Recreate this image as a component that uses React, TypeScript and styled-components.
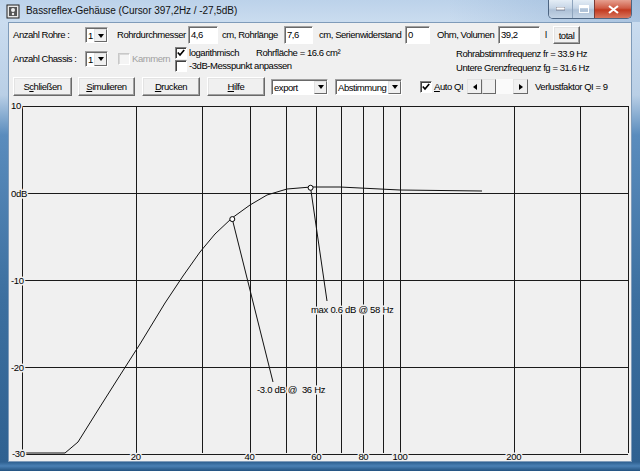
import styled, { createGlobalStyle } from "styled-components";

const UI_FONT = `"Liberation Sans", Arial, sans-serif`;

const GlobalStyle = createGlobalStyle`
  html, body { margin: 0; padding: 0; overflow: hidden; }
  body { font-family: ${UI_FONT}; font-size: 9.5px; letter-spacing: -0.45px; color: #000; }
  * { box-sizing: border-box; }
`;

const Window = styled.div`
  width: 640px;
  height: 471px;
  display: flex;
  flex-direction: column;
  padding: 0 8px 9px 8px;
  background: linear-gradient(
    180deg,
    #bcd2ea 0px,
    #cadcef 22px,
    #b9cfe6 95px,
    #5a8cbd 135px,
    #3c6f9f 300px,
    #2f6191 462px,
    #4a80b4 466px,
    #23527f 471px
  );
`;

const TitleBar = styled.div`
  height: 22px;
  margin: 0 -8px;
  padding: 0 8px 0 6px;
  display: flex;
  align-items: flex-start;
  background: linear-gradient(90deg, transparent 0%, transparent 70%, rgba(110, 150, 195, 0.35) 100%);
`;

const TitleText = styled.span`
  margin: 3px 0 0 6px;
  font-size: 10px;
  letter-spacing: -0.05px;
  line-height: 16px;
  color: #111;
`;

const CaptionGroup = styled.div`
  margin-left: auto;
  display: flex;
  height: 19px;
  border: 1px solid #4d6582;
  border-top: none;
  border-radius: 0 0 5px 5px;
  overflow: hidden;
`;

const CaptionBtn = styled.div<{ $w: number; $close?: boolean }>`
  width: ${(p) => p.$w}px;
  display: flex;
  align-items: center;
  justify-content: center;
  border-left: ${(p) => (p.$close ? "1px solid #7a3b35" : "1px solid #8ea4bd")};
  background: ${(p) =>
    p.$close
      ? "linear-gradient(180deg, #e6a090 0%, #cf5c46 45%, #c2391f 55%, #d8775f 100%)"
      : "linear-gradient(180deg, #e4edf6 0%, #c6d5e6 45%, #adc0d6 55%, #c4d4e6 100%)"};
  &:first-child { border-left: none; }
`;

const Client = styled.div`
  flex: 1;
  display: flex;
  flex-direction: column;
  background: #f0f0f0;
  border: 1px solid #7f9bb9;
`;

const Row = styled.div<{ $h: number; $mt?: number }>`
  height: ${(p) => p.$h}px;
  margin-top: ${(p) => p.$mt ?? 0}px;
  padding-left: 4px;
  display: flex;
  align-items: center;
  white-space: nowrap;
`;

const Label = styled.span<{ $w?: number; $ml?: number; $dim?: boolean }>`
  ${(p) => (p.$w ? `width: ${p.$w}px; flex: none;` : "")}
  margin-left: ${(p) => p.$ml ?? 0}px;
  color: ${(p) => (p.$dim ? "#a0a0a0" : "#000")};
  line-height: 12px;
`;

const TextBox = styled.div<{ $w: number }>`
  width: ${(p) => p.$w}px;
  height: 18px;
  flex: none;
  padding: 1px 2px;
  line-height: 13px;
  background: #fff;
  border: 1px solid;
  border-color: #a0a0a0 #fff #fff #a0a0a0;
  box-shadow: inset 1px 1px #696969;
`;

const Combo = styled.div<{ $w: number; $ml?: number }>`
  width: ${(p) => p.$w}px;
  height: 16px;
  flex: none;
  margin-left: ${(p) => p.$ml ?? 0}px;
  display: flex;
  background: #fff;
  border: 1px solid;
  border-color: #a0a0a0 #fff #fff #a0a0a0;
  box-shadow: inset 1px 1px #696969;
  padding: 1px 0 0 1px;
`;

const ComboText = styled.span`
  flex: 1;
  padding-left: 1px;
  line-height: 13px;
`;

const ComboArrow = styled.span`
  width: 13px;
  flex: none;
  display: flex;
  align-items: center;
  justify-content: center;
  background: #f0f0f0;
  border: 1px solid;
  border-color: #e3e3e3 #696969 #696969 #e3e3e3;
  &::after {
    content: "";
    border-left: 3.5px solid transparent;
    border-right: 3.5px solid transparent;
    border-top: 4px solid #000;
  }
`;

const Button = styled.div<{ $w: number; $ml?: number; $h?: number }>`
  width: ${(p) => p.$w}px;
  height: ${(p) => p.$h ?? 19}px;
  flex: none;
  margin-left: ${(p) => p.$ml ?? 0}px;
  display: flex;
  align-items: center;
  justify-content: center;
  background: #f0f0f0;
  border: 1px solid;
  border-color: #fff #696969 #696969 #fff;
  box-shadow: inset -1px -1px #a0a0a0, inset 1px 1px #e3e3e3;
`;

const CheckBox = styled.span<{ $ml?: number; $disabled?: boolean }>`
  width: 12px;
  height: 12px;
  flex: none;
  margin-left: ${(p) => p.$ml ?? 0}px;
  display: inline-flex;
  align-items: center;
  justify-content: center;
  background: ${(p) => (p.$disabled ? "#f4f4f4" : "#fff")};
  border: 1px solid;
  border-color: ${(p) =>
    p.$disabled ? "#c8c8c8 #fff #fff #c8c8c8" : "#808080 #fff #fff #808080"};
  box-shadow: inset 1px 1px ${(p) => (p.$disabled ? "#d8d8d8" : "#404040")};
`;

const CheckGroup = styled.div`
  width: 281px;
  flex: none;
  align-self: flex-start;
  padding-top: 1px;
  display: flex;
  flex-direction: column;
`;

const CheckLine = styled.div`
  height: 13px;
  display: flex;
  align-items: center;
`;

const InfoLines = styled.div`
  align-self: flex-start;
  padding-top: 2px;
  display: flex;
  flex-direction: column;
  line-height: 14px;
`;

const ScrollBar = styled.div<{ $ml?: number }>`
  width: 61px;
  height: 15px;
  flex: none;
  margin-left: ${(p) => p.$ml ?? 0}px;
  display: flex;
  background: #fafafa;
`;

const ScrollPart = styled.span<{ $w: number; $dir?: "left" | "right" }>`
  width: ${(p) => p.$w}px;
  flex: none;
  display: flex;
  align-items: center;
  justify-content: center;
  background: #f0f0f0;
  border: 1px solid;
  border-color: #e3e3e3 #696969 #696969 #e3e3e3;
  ${(p) =>
    p.$dir
      ? `&::after {
    content: "";
    border-top: 3.5px solid transparent;
    border-bottom: 3.5px solid transparent;
    ${p.$dir === "left" ? "border-right" : "border-left"}: 4px solid #000;
  }`
      : ""}
`;

const ScrollTrack = styled.span`
  flex: 1;
`;

const Chart = styled.svg`
  display: block;
  flex: none;
  letter-spacing: normal;
`;

// chart scale: 10 Hz .. 400 Hz log, +10 .. -30 dB
const X0 = 22;
const X1 = 628;
const Y_TOP = 106;
const Y_BOT = 453;
const xOf = (hz: number) => X0 + 378 * Math.log10(hz / 10);
const yOf = (db: number) => 193 - db * 8.7;

const gridHz = [20, 30, 40, 50, 60, 70, 80, 90, 100, 200, 300];
const gridDb = [10, 0, -10, -20, -30];
const xLabels = [20, 40, 60, 80, 100, 200];

// simulated response, traced in plot pixels
const curve: [number, number][] = [
  [22, 453], [65, 453], [78, 442], [98, 410], [117, 380], [140, 344],
  [165, 303], [183, 276], [200, 252], [215, 234], [232, 218], [250, 205],
  [267, 195], [287, 189], [311, 187], [340, 187], [400, 190], [482, 191],
];

const halo = {
  paintOrder: "stroke" as const,
  stroke: "#f0f0f0",
  strokeWidth: 3,
  whiteSpace: "pre" as const,
};

function ResponseChart() {
  const m1 = { x: xOf(36), y: yOf(-3) };
  const m2 = { x: xOf(58), y: yOf(0.6) };
  return (
    <Chart width={622} height={365} viewBox="9 96 622 365">
      <g stroke="#1a1a1a" strokeWidth={1} shapeRendering="crispEdges">
        {gridDb.map((db) => (
          <line key={db} x1={X0} x2={X1} y1={Math.round(yOf(db)) + 0.5} y2={Math.round(yOf(db)) + 0.5} />
        ))}
        <line x1={X0 + 0.5} x2={X0 + 0.5} y1={Y_TOP} y2={Y_BOT} />
        <line x1={X1 + 0.5} x2={X1 + 0.5} y1={Y_TOP} y2={Y_BOT} />
        {gridHz.map((hz) => (
          <line key={hz} x1={Math.round(xOf(hz)) + 0.5} x2={Math.round(xOf(hz)) + 0.5} y1={Y_TOP} y2={Y_BOT} />
        ))}
      </g>
      <polyline
        points={curve.map((p) => p.join(",")).join(" ")}
        fill="none"
        stroke="#111"
        strokeWidth={1}
      />
      <line x1={m1.x} y1={m1.y} x2={273} y2={382} stroke="#111" />
      <line x1={m2.x} y1={m2.y} x2={327} y2={301} stroke="#111" />
      <circle cx={m1.x} cy={m1.y} r={2.5} fill="#fff" stroke="#000" />
      <circle cx={m2.x} cy={m2.y} r={2.5} fill="#fff" stroke="#000" />
      <g fontFamily={UI_FONT} fontSize={9.5} letterSpacing={-0.3} fill="#000">
        <text x={11} y={109} style={halo}>10</text>
        <text x={11} y={196.5} style={halo}>0dB</text>
        <text x={11} y={283.5} style={halo}>-10</text>
        <text x={11} y={370.5} style={halo}>-20</text>
        <text x={12} y={457} style={halo}>-30</text>
        {xLabels.map((hz) => (
          <text key={hz} x={xOf(hz)} y={459.5} textAnchor="middle" style={halo}>
            {hz}
          </text>
        ))}
        <text x={311} y={313} style={halo}>max 0.6 dB @ 58 Hz</text>
        <text x={257} y={392.5} style={halo}>{"-3.0 dB @  36 Hz"}</text>
      </g>
    </Chart>
  );
}

function AppIcon() {
  return (
    <svg width="14" height="15" viewBox="0 0 14 15" style={{ marginTop: 4 }}>
      <rect x="1" y="1" width="12" height="13" fill="#e8e8e8" stroke="#222" />
      <rect x="3" y="3" width="8" height="9" fill="#555" />
      <circle cx="7" cy="6" r="2" fill="#eee" />
      <circle cx="7" cy="10" r="1.2" fill="#eee" />
    </svg>
  );
}

function Check() {
  return (
    <svg width="8" height="8" viewBox="0 0 8 8">
      <polyline points="0.8,3.5 3,6 7.2,1" fill="none" stroke="#000" strokeWidth={1.7} />
    </svg>
  );
}

export default function App() {
  return (
    <>
      <GlobalStyle />
      <Window>
        <TitleBar>
          <AppIcon />
          <TitleText>Bassreflex-Gehäuse (Cursor 397,2Hz / -27,5dB)</TitleText>
          <CaptionGroup>
            <CaptionBtn $w={23}>
              <svg width="9" height="4"><rect width="9" height="3" fill="#fff" stroke="#334" strokeWidth="0.5" /></svg>
            </CaptionBtn>
            <CaptionBtn $w={22}>
              <svg width="10" height="8"><rect x="0.5" y="0.5" width="9" height="7" fill="none" stroke="#fff" strokeWidth="1" /><rect x="1" y="1" width="8" height="2" fill="#fff" /></svg>
            </CaptionBtn>
            <CaptionBtn $w={37} $close>
              <svg width="11" height="9"><path d="M1 1 L10 8 M10 1 L1 8" stroke="#fff" strokeWidth="2.2" /></svg>
            </CaptionBtn>
          </CaptionGroup>
        </TitleBar>
        <Client>
          <Row $h={18} $mt={3}>
            <Label $w={72}>Anzahl Rohre :</Label>
            <Combo $w={23}><ComboText>1</ComboText><ComboArrow /></Combo>
            <Label $w={71} $ml={9}>Rohrdurchmesser</Label>
            <TextBox $w={30}>4,6</TextBox>
            <Label $w={62} $ml={4}>cm, Rohrlänge</Label>
            <TextBox $w={29}>7,6</TextBox>
            <Label $w={86} $ml={6}>cm, Serienwiderstand</Label>
            <TextBox $w={25}>0</TextBox>
            <Label $w={61} $ml={7}>Ohm, Volumen</Label>
            <TextBox $w={42}>39,2</TextBox>
            <Label $w={8} $ml={5}>l</Label>
            <Button $w={27} $h={18}>total</Button>
          </Row>
          <Row $h={27} $mt={1}>
            <Label $w={72}>Anzahl Chassis :</Label>
            <Combo $w={23}><ComboText>1</ComboText><ComboArrow /></Combo>
            <CheckBox $ml={10} $disabled />
            <Label $w={43} $ml={2} $dim>Kammern</Label>
            <CheckGroup>
              <CheckLine>
                <CheckBox><Check /></CheckBox>
                <Label $w={67} $ml={2}>logarithmisch</Label>
                <Label>Rohrfläche = 16.6 cm²</Label>
              </CheckLine>
              <CheckLine>
                <CheckBox />
                <Label $ml={2}>-3dB-Messpunkt anpassen</Label>
              </CheckLine>
            </CheckGroup>
            <InfoLines>
              <span>Rohrabstimmfrequenz fr = 33.9 Hz</span>
              <span>Untere Grenzfrequenz fg = 31.6 Hz</span>
            </InfoLines>
          </Row>
          <Row $h={19} $mt={5}>
            <Button $w={59}><span>S<u>c</u>hließen</span></Button>
            <Button $w={57} $ml={6}><span><u>S</u>imulieren</span></Button>
            <Button $w={58} $ml={7}><span><u>D</u>rucken</span></Button>
            <Button $w={58} $ml={7}><span><u>H</u>ilfe</span></Button>
            <Combo $w={57} $ml={6}><ComboText>export</ComboText><ComboArrow /></Combo>
            <Combo $w={67} $ml={7}><ComboText>Abstimmung</ComboText><ComboArrow /></Combo>
            <CheckBox $ml={18}><Check /></CheckBox>
            <Label $w={29} $ml={2}><u>A</u>uto QI</Label>
            <ScrollBar $ml={4}>
              <ScrollPart $w={15} $dir="left" />
              <ScrollPart $w={14} />
              <ScrollTrack />
              <ScrollPart $w={15} $dir="right" />
            </ScrollBar>
            <Label $ml={7}>Verlustfaktor QI = 9</Label>
          </Row>
          <ResponseChart />
        </Client>
      </Window>
    </>
  );
}
